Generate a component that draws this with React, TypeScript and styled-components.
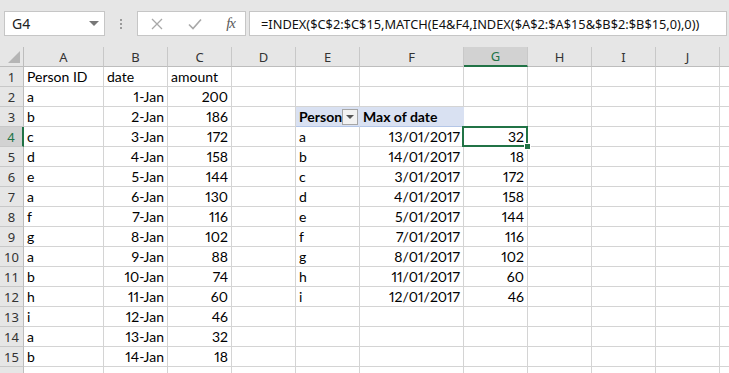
import styled, { createGlobalStyle, css } from 'styled-components'

const GlobalStyle = createGlobalStyle`
  html, body {
    margin: 0;
    padding: 0;
    background: #ffffff;
  }
  body {
    font-family: 'Lato', 'Liberation Sans', sans-serif;
    overflow: hidden;
  }
`;

const Window = styled.div`
  width: 100vw;
  height: 100vh;
  overflow: hidden;
  display: flex;
  flex-direction: column;
  background: #fff;
`;

const TopBar = styled.div`
  height: 47px;
  box-sizing: border-box;
  flex-shrink: 0;
  background: #e6e6e6;
  display: flex;
  align-items: flex-start;
  padding: 11px 2px 0 4px;
`;

const NameBox = styled.div`
  width: 101px;
  height: 25px;
  box-sizing: border-box;
  background: #fff;
  border: 1px solid #c6c6c6;
  display: flex;
  align-items: center;
  justify-content: space-between;
  padding: 0 5px 0 7px;
  font-family: 'Noto Sans', 'Open Sans', sans-serif;
  font-size: 14px;
  color: #222;
`;

const Caret = styled.span`
  width: 0;
  height: 0;
  border-left: 5px solid transparent;
  border-right: 5px solid transparent;
  border-top: 5px solid #777;
`;

const Grip = styled.div`
  width: 32px;
  height: 25px;
  display: flex;
  flex-direction: column;
  align-items: center;
  justify-content: center;
  gap: 2px;
  span {
    width: 2px;
    height: 2px;
    background: #9a9a9a;
  }
`;

const FxButtons = styled.div`
  width: 109px;
  height: 25px;
  box-sizing: border-box;
  background: #fff;
  border: 1px solid #c6c6c6;
  display: flex;
  align-items: center;
  justify-content: space-between;
  padding: 0 10px 0 13px;
`;

const FxLabel = styled.span`
  font-family: 'Liberation Serif', serif;
  font-style: italic;
  font-size: 15px;
  color: #5a5a5a;
  letter-spacing: -1px;
`;

const FormulaInput = styled.div`
  flex: 1;
  margin-left: 3px;
  height: 25px;
  box-sizing: border-box;
  background: #fff;
  border: 1px solid #c6c6c6;
  display: flex;
  align-items: center;
  padding: 0 0 0 11px;
  font-family: 'Noto Sans', 'Open Sans', sans-serif;
  font-size: 12.8px;
  color: #111;
  white-space: nowrap;
  overflow: hidden;
`;

const Sheet = styled.div`
  display: grid;
  grid-template-columns: 24px 80px 64px 64px 64px 64px 104px 64px 64px 64px 64px 64px;
  grid-auto-rows: 20px;
  width: max-content;
`;

const headerBase = css`
  box-sizing: border-box;
  background: #e6e6e6;
  display: flex;
  align-items: center;
  justify-content: center;
  font-family: 'Noto Sans', 'Open Sans', sans-serif;
  font-size: 13px;
  color: #333;
`;

const Corner = styled.div`
  ${headerBase};
  border-right: 1px solid #bdbdbd;
  border-bottom: 1px solid #bdbdbd;
  align-items: flex-end;
  justify-content: flex-end;
  padding: 0 3px 3px 0;
`;

const ColHeader = styled.div<{ $active?: boolean }>`
  ${headerBase};
  border-right: 1px solid #c8c8c8;
  border-bottom: ${p => (p.$active ? '2px solid #217346' : '1px solid #bdbdbd')};
  background: ${p => (p.$active ? '#d2d2d2' : '#e6e6e6')};
  color: ${p => (p.$active ? '#217346' : '#333')};
`;

const RowHeader = styled.div<{ $active?: boolean }>`
  ${headerBase};
  border-bottom: 1px solid #c8c8c8;
  border-right: ${p => (p.$active ? '2px solid #217346' : '1px solid #bdbdbd')};
  background: ${p => (p.$active ? '#d2d2d2' : '#e6e6e6')};
  color: ${p => (p.$active ? '#217346' : '#333')};
`;

const Cell = styled.div<{ $right?: boolean; $bold?: boolean; $pivot?: boolean; $selected?: boolean }>`
  position: relative;
  box-sizing: border-box;
  border-right: 1px solid ${p => (p.$pivot ? '#d9e1f2' : '#d4d4d4')};
  border-bottom: 1px solid ${p => (p.$pivot ? '#b4c6e7' : '#d4d4d4')};
  background: ${p => (p.$pivot ? '#d9e1f2' : '#fff')};
  display: flex;
  align-items: center;
  justify-content: ${p => (p.$right ? 'flex-end' : 'flex-start')};
  padding: 0 3px;
  font-size: 14px;
  line-height: 19px;
  font-weight: ${p => (p.$bold ? 700 : 400)};
  font-variant-numeric: proportional-nums;
  color: #000;
  white-space: nowrap;

  ${p =>
    p.$selected &&
    css`
      &::after {
        content: '';
        position: absolute;
        top: -1px;
        left: -2px;
        right: -1px;
        bottom: -1px;
        border: 2px solid #217346;
        pointer-events: none;
      }
      &::before {
        content: '';
        position: absolute;
        right: -4px;
        bottom: -4px;
        width: 5px;
        height: 5px;
        background: #217346;
        border: 1px solid #fff;
        z-index: 2;
      }
    `}
`;

const DropButton = styled.span`
  margin-left: auto;
  margin-right: -2px;
  width: 16px;
  height: 16px;
  box-sizing: border-box;
  background: #f2f2f2;
  border: 1px solid #a6a6a6;
  display: flex;
  align-items: center;
  justify-content: center;
`;

const SmallCaret = styled.span`
  width: 0;
  height: 0;
  border-left: 4px solid transparent;
  border-right: 4px solid transparent;
  border-top: 4px solid #555;
`;

type CellData = {
  v: string
  right?: boolean
  bold?: boolean
  pivot?: boolean
  dropdown?: boolean
  selected?: boolean
}

// K is only a sliver at the right edge, so its letter stays off-screen
const letters = ['A', 'B', 'C', 'D', 'E', 'F', 'G', 'H', 'I', 'J', '']

const source: [string, string, string][] = [
  ['a', '1-Jan', '200'],
  ['b', '2-Jan', '186'],
  ['c', '3-Jan', '172'],
  ['d', '4-Jan', '158'],
  ['e', '5-Jan', '144'],
  ['a', '6-Jan', '130'],
  ['f', '7-Jan', '116'],
  ['g', '8-Jan', '102'],
  ['a', '9-Jan', '88'],
  ['b', '10-Jan', '74'],
  ['h', '11-Jan', '60'],
  ['i', '12-Jan', '46'],
  ['a', '13-Jan', '32'],
  ['b', '14-Jan', '18'],
]

const pivot: [string, string, string][] = [
  ['a', '13/01/2017', '32'],
  ['b', '14/01/2017', '18'],
  ['c', '3/01/2017', '172'],
  ['d', '4/01/2017', '158'],
  ['e', '5/01/2017', '144'],
  ['f', '7/01/2017', '116'],
  ['g', '8/01/2017', '102'],
  ['h', '11/01/2017', '60'],
  ['i', '12/01/2017', '46'],
]

function buildRows(): (CellData | null)[][] {
  const rows: (CellData | null)[][] = []
  for (let r = 1; r <= 16; r++) {
    const row: (CellData | null)[] = letters.map(() => null)
    if (r === 1) {
      row[0] = { v: 'Person ID' }
      row[1] = { v: 'date' }
      row[2] = { v: 'amount' }
    } else if (r <= 15) {
      const s = source[r - 2]
      row[0] = { v: s[0] }
      row[1] = { v: s[1], right: true }
      row[2] = { v: s[2], right: true }
    }
    if (r === 3) {
      row[4] = { v: 'Person', bold: true, pivot: true, dropdown: true }
      row[5] = { v: 'Max of date', bold: true, pivot: true }
    }
    if (r >= 4 && r <= 12) {
      const p = pivot[r - 4]
      row[4] = { v: p[0] }
      row[5] = { v: p[1], right: true }
      row[6] = { v: p[2], right: true, selected: r === 4 }
    }
    rows.push(row)
  }
  return rows
}

const rows = buildRows()

function App() {
  return (
    <Window>
      <GlobalStyle />
      <TopBar>
        <NameBox>
          <span>G4</span>
          <Caret />
        </NameBox>
        <Grip>
          <span />
          <span />
          <span />
        </Grip>
        <FxButtons>
          <svg width="12" height="12" viewBox="0 0 12 12">
            <path d="M1 1 L11 11 M11 1 L1 11" stroke="#a8a8a8" strokeWidth="1.3" fill="none" />
          </svg>
          <svg width="14" height="12" viewBox="0 0 14 12">
            <path d="M1 6.5 L5 10.5 L13 1.5" stroke="#a8a8a8" strokeWidth="1.6" fill="none" />
          </svg>
          <FxLabel>fx</FxLabel>
        </FxButtons>
        <FormulaInput>=INDEX($C$2:$C$15,MATCH(E4&amp;F4,INDEX($A$2:$A$15&amp;$B$2:$B$15,0),0))</FormulaInput>
      </TopBar>
      <Sheet>
        <Corner>
          <svg width="12" height="12" viewBox="0 0 12 12">
            <path d="M12 0 L12 12 L0 12 Z" fill="#b5b5b5" />
          </svg>
        </Corner>
        {letters.map((l, i) => (
          <ColHeader key={i} $active={l === 'G'}>
            {l}
          </ColHeader>
        ))}
        {rows.map((row, i) => (
          <Row key={i} index={i + 1} cells={row} />
        ))}
      </Sheet>
    </Window>
  )
}

function Row({ index, cells }: { index: number; cells: (CellData | null)[] }) {
  // row 16 is cut by the window bottom, its number falls below the edge
  return (
    <>
      <RowHeader $active={index === 4}>{index < 16 ? index : ''}</RowHeader>
      {cells.map((c, j) => (
        <Cell
          key={j}
          $right={c?.right}
          $bold={c?.bold}
          $pivot={c?.pivot}
          $selected={c?.selected}
        >
          {c?.v}
          {c?.dropdown && (
            <DropButton>
              <SmallCaret />
            </DropButton>
          )}
        </Cell>
      ))}
    </>
  )
}

export default App
